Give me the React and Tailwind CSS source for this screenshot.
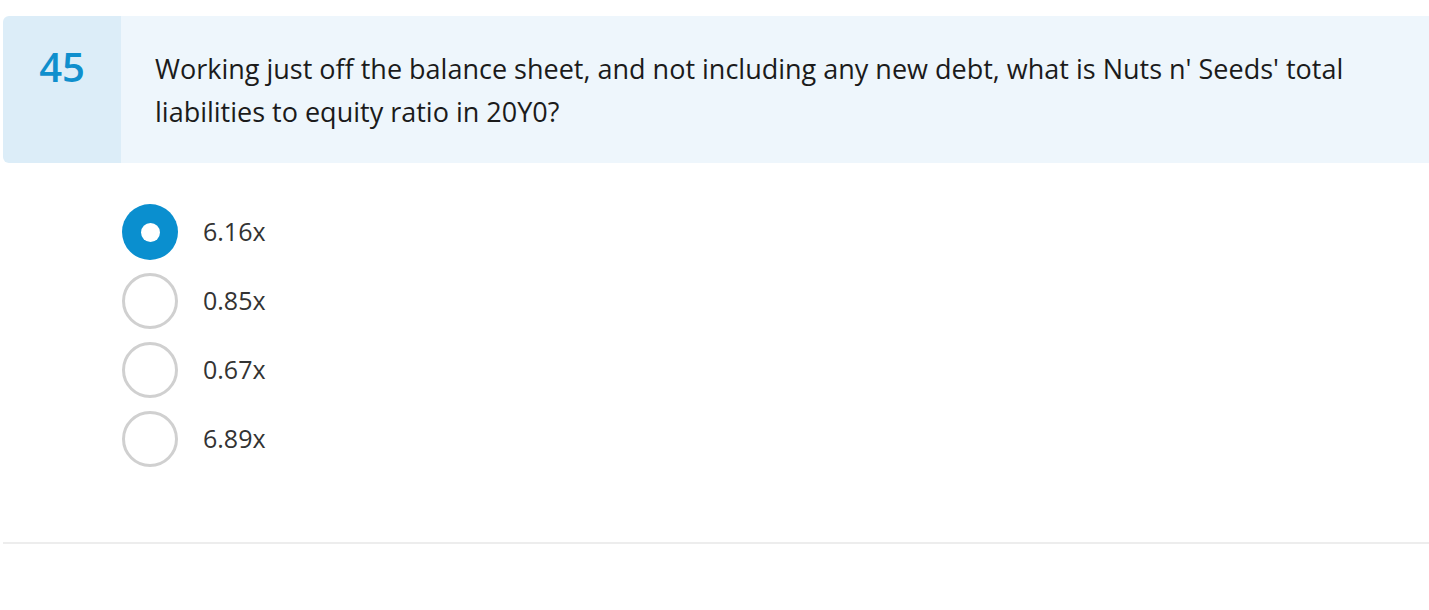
import React from "react";

const options = [
  { label: "6.16x", selected: true },
  { label: "0.85x", selected: false },
  { label: "0.67x", selected: false },
  { label: "6.89x", selected: false },
];

export default function App() {
  return (
    <div
      className="w-[1429px] h-[610px] bg-white overflow-hidden pl-[3px] pt-[16px]"
      style={{ fontFamily: '"Open Sans", "Noto Sans", sans-serif' }}
    >
      <div className="flex h-[147px] rounded-l-[6px] overflow-hidden">
        <div className="w-[118px] bg-[#dcedf8] flex justify-center pt-[26px]">
          <span className="text-[40px] leading-[50px] font-semibold text-[#0f8fcd]">45</span>
        </div>
        <div className="flex-1 bg-[#eef6fc] pl-[34px] pt-[31px] pr-[40px]">
          <p className="text-[27px] leading-[43px] text-[#1b1b1b] max-w-[1220px]">
            Working just off the balance sheet, and not including any new debt, what is Nuts n' Seeds' total liabilities to equity ratio in 20Y0?
          </p>
        </div>
      </div>

      <div className="flex flex-col gap-[13px] pl-[119px] pt-[41px]">
        {options.map((o) => (
          <div key={o.label} className="flex items-center gap-[25px]">
            {o.selected ? (
              <div className="w-[56px] h-[56px] rounded-full bg-[#0a8fcf] flex items-center justify-center">
                <div className="w-[19px] h-[19px] rounded-full bg-white" />
              </div>
            ) : (
              <div className="w-[56px] h-[56px] rounded-full border-[3px] border-[#d0d0d0] bg-white" />
            )}
            <span className="text-[25px] text-[#333333]">{o.label}</span>
          </div>
        ))}
      </div>

      <div className="mt-[75px] h-[2px] bg-[#ededed]" />
    </div>
  );
}
